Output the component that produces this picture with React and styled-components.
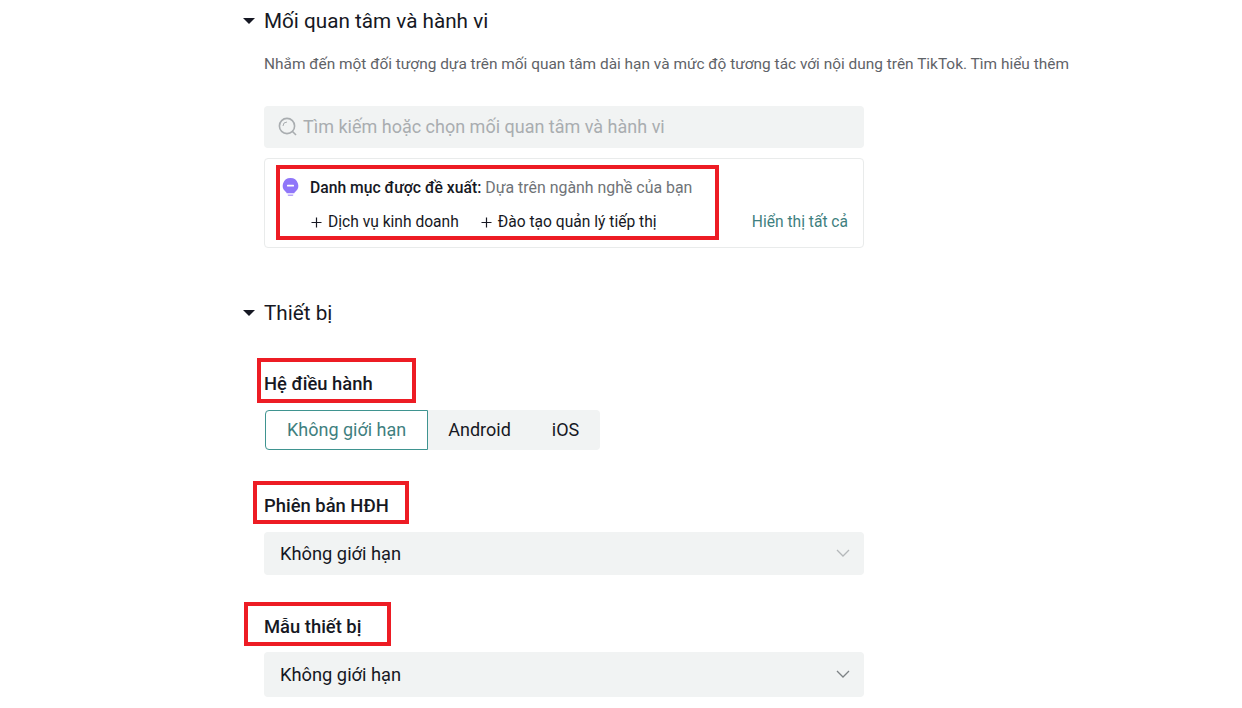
import React from 'react';
import styled, { createGlobalStyle } from 'styled-components';

const Global = createGlobalStyle`
    html, body {
        margin: 0;
        background: #fff;
        font-family: Roboto, "Liberation Sans", sans-serif;
        color: #161823;
    }
`;

const Page = styled.div`
    position: relative;
    width: 1242px;
    height: 708px;
    overflow: hidden;
    padding-left: 243px;
    box-sizing: border-box;
`;

const SectionHead = styled.div`
    display: flex;
    align-items: center;
    gap: 8px;
    height: 28px;
    margin-top: ${(p) => p.$top}px;
`;

const Caret = styled.span`
    width: 0;
    height: 0;
    border-left: 6.5px solid transparent;
    border-right: 6.5px solid transparent;
    border-top: 6px solid #161823;
`;

const SectionTitle = styled.h2`
    margin: 0 0 0 1px;
    font-size: 20.7px;
    font-weight: 400;
    line-height: 28px;
`;

const Body = styled.div`
    margin-left: 21px;
    width: 600px;
`;

const Description = styled.p`
    margin: 19px 0 0;
    font-size: 15.43px;
    line-height: 20px;
    color: #5f6368;
    white-space: nowrap;
`;

const Search = styled.div`
    display: flex;
    align-items: center;
    gap: 5px;
    height: 42px;
    margin-top: 32px;
    padding: 0 0 1px 14px;
    box-sizing: border-box;
    background: #f1f3f3;
    border-radius: 4px;
    font-size: 18px;
    color: #a9adb0;
`;

const Suggest = styled.div`
    margin-top: 10px;
    height: 90px;
    box-sizing: border-box;
    border: 1px solid #e9ebeb;
    border-radius: 4px;
    padding: 17px 15px 0 17px;
`;

const SuggestTop = styled.div`
    display: flex;
    align-items: center;
    gap: 11px;
    height: 22px;
    font-size: 15.9px;
    color: #6f7377;
`;

const Strong = styled.b`
    font-weight: 500;
    font-size: 15.7px;
    color: #161823;
`;

const SuggestRow = styled.div`
    display: flex;
    align-items: center;
    margin-top: 13px;
    padding-left: 29px;
    height: 22px;
    font-size: 15.6px;
`;

const Chip = styled.span`
    display: flex;
    align-items: center;
    gap: 6px;
    margin-right: 22px;
`;

const ShowAll = styled.span`
    margin-left: auto;
    color: #3f7f80;
`;

const FieldLabel = styled.div`
    font-size: 18.4px;
    font-weight: 500;
    line-height: 24px;
    margin-top: ${(p) => p.$top}px;
`;

const Segments = styled.div`
    display: inline-flex;
    margin: 14px 0 0 1px;
    height: 40px;
    background: #f1f3f3;
    border-radius: 4px;
    font-size: 18px;
`;

const Segment = styled.div`
    display: flex;
    align-items: center;
    box-sizing: border-box;
    padding: 0 ${(p) => p.$pad}px 1px;
    ${(p) => p.$active && `
        background: #fff;
        border: 1px solid #3f9490;
        border-radius: 4px 0 0 4px;
        color: #3f7f80;
    `}
`;

const Select = styled.div`
    display: flex;
    align-items: center;
    justify-content: space-between;
    height: ${(p) => p.$height}px;
    margin-top: ${(p) => p.$top}px;
    padding: 0 14px 1px 16px;
    box-sizing: border-box;
    background: #f1f3f3;
    border-radius: 4px;
    font-size: 18.3px;
`;

// red annotation frames drawn on top of the screenshot
const Mark = styled.div`
    position: absolute;
    box-sizing: border-box;
    border: 4.5px solid #ed1c24;
    left: ${(p) => p.$x}px;
    top: ${(p) => p.$y}px;
    width: ${(p) => p.$w}px;
    height: ${(p) => p.$h}px;
`;

const SearchIcon = () => (
    <svg width="20" height="20" viewBox="0 0 20 20" fill="none" stroke="#a9adb0" strokeWidth="1.6">
        <circle cx="9" cy="9" r="7.6" />
        <path d="M14.5 14.5l3.5 3.5" />
        <path d="M5 9a4 4 0 0 1 4-4" strokeWidth="1" />
    </svg>
);

const BulbIcon = () => (
    <svg width="17" height="20" viewBox="0 0 17 20">
        <path d="M8.5 1a7.7 7.7 0 0 1 4.6 13.9c-.5.4-.7.8-.7 1.3H4.6c0-.5-.2-.9-.7-1.3A7.7 7.7 0 0 1 8.5 1z" fill="#8f76f9" />
        <path d="M5.7 17.4h5.600v.6a1 1 0 0 1-1 1H6.700a1 1 0 0 1-1-1z" fill="#b6a3fa" />
        <rect x="5" y="7.7" width="7" height="1.8" rx=".6" fill="#fff" />
    </svg>
);

const Plus = () => (
    <svg width="11" height="11" viewBox="0 0 11 11" stroke="#161823" strokeWidth="1.2">
        <path d="M5.5 0.5v10M0.5 5.5h10" />
    </svg>
);

const Chevron = ({ color }) => (
    <svg width="14" height="8" viewBox="0 0 14 8" fill="none" stroke={color} strokeWidth="1.3">
        <path d="M1 1l6 6 6-6" />
    </svg>
);

export default function App() {
    return (
        <Page>
            <Global />
            <SectionHead $top={7}>
                <Caret />
                <SectionTitle>Mối quan tâm và hành vi</SectionTitle>
            </SectionHead>
            <Body>
                <Description>Nhắm đến một đối tượng dựa trên mối quan tâm dài hạn và mức độ tương tác với nội dung trên TikTok. Tìm hiểu thêm</Description>
                <Search>
                    <SearchIcon />
                    Tìm kiếm hoặc chọn mối quan tâm và hành vi
                </Search>
                <Suggest>
                    <SuggestTop>
                        <BulbIcon />
                        <span><Strong>Danh mục được đề xuất:</Strong> Dựa trên ngành nghề của bạn</span>
                    </SuggestTop>
                    <SuggestRow>
                        <Chip><Plus />Dịch vụ kinh doanh</Chip>
                        <Chip><Plus />Đào tạo quản lý tiếp thị</Chip>
                        <ShowAll>Hiển thị tất cả</ShowAll>
                    </SuggestRow>
                </Suggest>
            </Body>
            <SectionHead $top={51}>
                <Caret />
                <SectionTitle>Thiết bị</SectionTitle>
            </SectionHead>
            <Body>
                <FieldLabel $top={45}>Hệ điều hành</FieldLabel>
                <Segments>
                    <Segment $active $pad={21}>Không giới hạn</Segment>
                    <Segment $pad={20}>Android</Segment>
                    <Segment $pad={21}>iOS</Segment>
                </Segments>
                <FieldLabel $top={44}>Phiên bản HĐH</FieldLabel>
                <Select $top={14} $height={43}>
                    Không giới hạn
                    <Chevron color="#b4b8ba" />
                </Select>
                <FieldLabel $top={40}>Mẫu thiết bị</FieldLabel>
                <Select $top={13} $height={45}>
                    Không giới hạn
                    <Chevron color="#7d8285" />
                </Select>
            </Body>
            <Mark $x={276} $y={165} $w={443} $h={75} />
            <Mark $x={257} $y={358} $w={159} $h={45} />
            <Mark $x={253} $y={481} $w={156} $h={43} />
            <Mark $x={244} $y={602} $w={147} $h={44} />
        </Page>
    );
}
